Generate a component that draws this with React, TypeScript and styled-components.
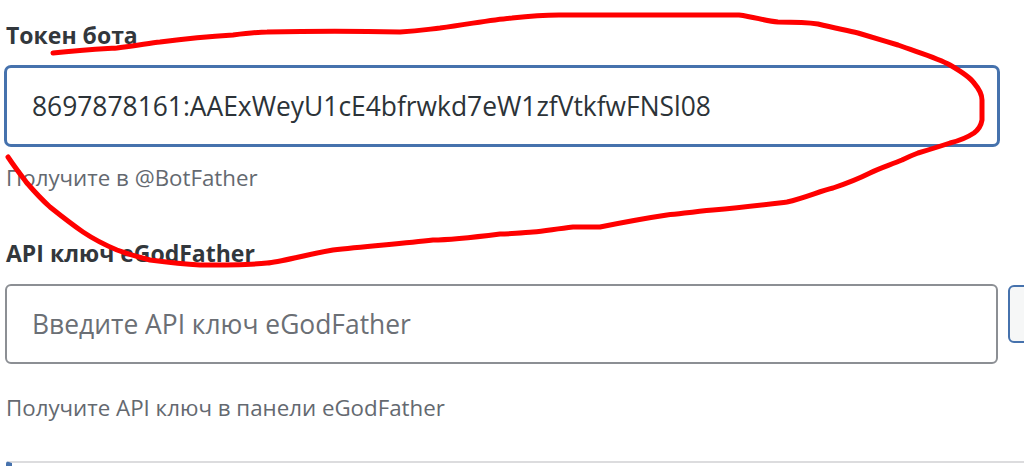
import React from "react";
import styled, { createGlobalStyle } from "styled-components";

const Global = createGlobalStyle`
  html, body { margin: 0; padding: 0; background: #ffffff; }
  body { font-family: "Open Sans", "Noto Sans", "Liberation Sans", sans-serif; overflow: hidden; }
  * { box-sizing: border-box; }
`;

const Page = styled.div`
  position: relative;
  width: 1024px;
  height: 466px;
  overflow: hidden;
  padding: 20px 0 0 5px;
  background: #ffffff;
`;

const Field = styled.div<{ $gapAfter: number }>`
  display: flex;
  flex-direction: column;
  margin-bottom: ${(p) => p.$gapAfter}px;
`;

const Label = styled.label`
  display: block;
  font-size: 23px;
  line-height: 30px;
  font-weight: 700;
  color: #32373c;
  padding-left: 1px;
  margin-bottom: 16px;
`;

const Row = styled.div`
  display: flex;
  align-items: flex-start;
  gap: 10px;
`;

const TextInput = styled.input<{ $focused?: boolean; $width: number }>`
  width: ${(p) => p.$width}px;
  height: 80px;
  flex: none;
  padding: 0 0 0 25px;
  border-radius: 6px;
  font-family: inherit;
  font-size: 26.4px;
  color: #2c3338;
  background: #ffffff;
  outline: none;
  border: 2px solid ${(p) => (p.$focused ? "#4672ad" : "#8c8f94")};
  box-shadow: ${(p) => (p.$focused ? "0 0 0 1px #4672ad" : "none")};
  &::placeholder { color: #6b6f75; opacity: 1; }
`;

const SideButton = styled.button`
  flex: none;
  width: 60px;
  height: 58px;
  margin-top: 1px;
  border: 2px solid #4672ad;
  border-radius: 6px;
  background: #f6f7f7;
`;

const Hint = styled.p<{ $top: number }>`
  margin: ${(p) => p.$top}px 0 0 0;
  padding-left: 1px;
  font-size: 22.3px;
  line-height: 26px;
  color: #646970;
`;

const Notice = styled.div`
  margin-left: 1px;
  height: 40px;
  border-top: 2px solid #dcdcde;
  border-left: 6px solid #4672ad;
  border-top-left-radius: 3px;
  background: #ffffff;
`;

const Scribble = styled.svg`
  position: absolute;
  left: 0;
  top: 0;
  pointer-events: none;
`;

const scribblePath =
  "M53 53 C80 50 100 49 117 48 C135 46 150 43 160 42 C190 38 215 36 233 35 C250 33 260 32 267 32 " +
  "C310 31 360 31 400 32 C420 31 430 29 440 28 C470 24 495 19 512 18 C530 16 545 15 559 15 " +
  "L739 15 C755 17 765 21 778 22 C795 22 805 22 818 24 C835 28 845 30 858 33 C875 38 885 41 898 45 " +
  "C920 53 938 58 950 65 C962 72 970 77 974 83 C980 90 982 95 982 100 L982 120 C981 126 978 130 974 133 " +
  "C965 139 958 141 950 143 C938 147 928 150 918 153 C910 156 906 158 902 160 C890 165 880 168 870 173 " +
  "C860 178 848 183 833 188 C820 191 805 198 787 202 C770 204 745 207 713 210 C690 212 680 214 667 215 " +
  "C640 219 620 223 600 227 C585 227 578 227 573 227 C555 229 545 231 533 232 C520 233 510 234 500 234 " +
  "C460 239 440 240 433 240 C400 244 365 246 333 250 C300 256 280 262 267 263 C250 265 220 265 200 265 " +
  "C180 264 165 262 150 260 C135 256 125 253 117 250 C105 245 95 240 83 232 C70 223 60 215 50 207 " +
  "C40 198 33 190 27 183 C20 174 14 166 8 157";

export default function App() {
  return (
    <>
      <Global />
      <Page>
        <Field $gapAfter={47}>
          <Label>Токен бота</Label>
          <Row>
            <TextInput
              $focused
              $width={994}
              defaultValue="8697878161:AAExWeyU1cE4bfrwkd7eW1zfVtkfwFNSl08"
              readOnly
            />
          </Row>
          <Hint $top={19}>Получите в @BotFather</Hint>
        </Field>
        <Field $gapAfter={40}>
          <Label>API ключ eGodFather</Label>
          <Row>
            <TextInput $width={993} placeholder="Введите API ключ eGodFather" />
            <SideButton type="button" aria-label="Проверить" />
          </Row>
          <Hint $top={31}>Получите API ключ в панели eGodFather</Hint>
        </Field>
        <Notice />
        <Scribble width="1024" height="466" viewBox="0 0 1024 466">
          <path
            d={scribblePath}
            fill="none"
            stroke="#ff0000"
            strokeWidth="5"
            strokeLinecap="round"
            strokeLinejoin="round"
          />
        </Scribble>
      </Page>
    </>
  );
}
